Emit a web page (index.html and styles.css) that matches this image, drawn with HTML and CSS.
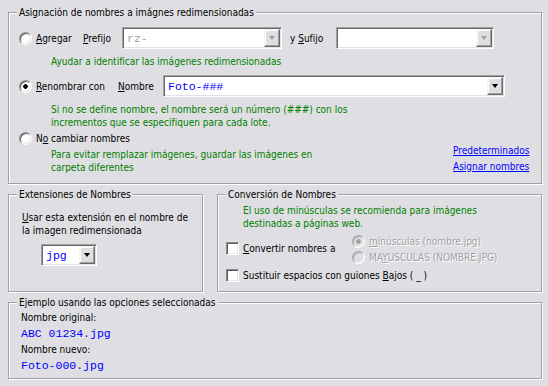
FILE: index.html
```html
<!DOCTYPE html>
<html lang="es">
<head>
  <meta charset="UTF-8">
  <title>Nombres de imágenes</title>
  <link rel="stylesheet" href="styles.css">
</head>
<body>
  <div class="dialog">
    <fieldset class="group naming">
      <legend>Asignación de nombres a imágnes redimensionadas</legend>

      <div class="row row-add">
        <label class="opt opt-add"><input type="radio" name="mode"><span><u>A</u>gregar</span></label>
        <span class="field-label w-prefix"><u>P</u>refijo</span>
        <div class="combo combo-prefix disabled"><span class="combo-text">rz-</span><span class="combo-btn"></span></div>
        <span class="field-label w-suffix">y <u>S</u>ufijo</span>
        <div class="combo combo-suffix disabled"><span class="combo-text"></span><span class="combo-btn"></span></div>
      </div>
      <p class="hint hint-add">Ayudar a identificar las imágenes redimensionadas</p>

      <div class="row row-rename">
        <label class="opt opt-rename"><input type="radio" name="mode" checked><span><u>R</u>enombrar con</span></label>
        <span class="field-label w-name"><u>N</u>ombre</span>
        <div class="combo combo-name"><span class="combo-text">Foto-###</span><span class="combo-btn"></span></div>
      </div>
      <p class="hint hint-rename">Si no se define nombre, el nombre será un número (###) con los<br>incrementos que se especifiquen para cada lote.</p>

      <div class="keep-area">
        <div class="keep-col">
          <label class="opt"><input type="radio" name="mode"><span>N<u>o</u> cambiar nombres</span></label>
          <p class="hint hint-keep">Para evitar remplazar imágenes, guardar las imágenes en<br>carpeta diferentes</p>
        </div>
        <div class="links">
          <a href="#">Predeterminados</a>
          <a href="#">Asignar nombres</a>
        </div>
      </div>
    </fieldset>

    <div class="lower">
      <fieldset class="group ext">
        <legend>Extensiones de Nombres</legend>
        <p class="ext-text"><u>U</u>sar esta extensión en el nombre de<br>la imagen redimensionada</p>
        <div class="combo combo-ext"><span class="combo-text">jpg</span><span class="combo-btn"></span></div>
      </fieldset>

      <fieldset class="group conv">
        <legend>Conversión de Nombres</legend>
        <p class="hint hint-conv">El uso de minúsculas se recomienda para imágenes<br>destinadas a páginas web.</p>
        <div class="conv-row">
          <label class="check check-convert"><input type="checkbox"><span><u>C</u>onvertir nombres a</span></label>
          <div class="case-options">
            <label class="opt off"><input type="radio" name="case" checked disabled><span><u>m</u>inúsculas (nombre.jpg)</span></label>
            <label class="opt off"><input type="radio" name="case" disabled><span>MA<u>Y</u>USCULAS (NOMBRE.JPG)</span></label>
          </div>
        </div>
        <label class="check check-spaces"><input type="checkbox"><span>Sustituir espacios con guiones <u>B</u>ajos ( _ )</span></label>
      </fieldset>
    </div>

    <fieldset class="group sample">
      <legend>Ejemplo usando las opciones seleccionadas</legend>
      <p class="sample-line">Nombre original:</p>
      <p class="sample-line mono">ABC 01234.jpg</p>
      <p class="sample-line">Nombre nuevo:</p>
      <p class="sample-line mono">Foto-000.jpg</p>
    </fieldset>
  </div>
</body>
</html>
```

FILE: styles.css
```css
body {
  margin: 0;
  background-color: #dfdfe3;
  font-family: "DejaVu Sans Condensed", "Liberation Sans", sans-serif;
  font-size: 10px;
  line-height: 13px;
  color: #000;
  white-space: nowrap;
}

p {
  margin: 0;
}

.dialog {
  width: 548px;
  height: 386px;
  box-sizing: border-box;
  padding: 6px 6px 0 8px;
}

/* etched group boxes */
.group {
  --pad: 0px;
  margin: 0;
  padding: 0 0 0 var(--pad);
  min-width: 0;
  border: 1px solid #a0a0a0;
  box-shadow: inset 1px 1px 0 #fff, 1px 1px 0 #fff;
}

.group legend {
  margin-left: calc(8px - var(--pad));
  padding: 0 2px;
  line-height: 13px;
  background-color: #dfdfe3;
}

.naming {
  --pad: 10px;
  padding-right: 8px;
  padding-bottom: 9px;
}

.row {
  display: flex;
  align-items: center;
  height: 22px;
}

.row-add {
  margin-top: 8px;
}

.row-rename {
  margin-top: 7px;
}

.opt {
  display: flex;
  align-items: center;
  gap: 4px;
  height: 13px;
}

.opt-add {
  width: 64px;
}

.opt-rename {
  width: 99px;
}

.field-label {
  flex: none;
}

.w-prefix {
  width: 39px;
}

.w-suffix {
  width: 46px;
  margin-left: 8px;
}

.w-name {
  width: 45px;
}

.hint {
  color: #008000;
}

.hint-add {
  margin: 6px 0 0 32px;
}

.hint-rename {
  margin: 6px 0 0 32px;
}

.keep-area {
  display: flex;
  justify-content: space-between;
  align-items: flex-end;
  margin-top: 3px;
}

.hint-keep {
  margin: 3px 0 0 32px;
}

.links {
  display: flex;
  flex-direction: column;
  width: 80px;
  line-height: 16px;
  margin-bottom: -1px;
}

.links a {
  color: #0000ff;
}

/* radio buttons and check boxes */
input[type="radio"],
input[type="checkbox"] {
  appearance: none;
  flex: none;
  width: 13px;
  height: 13px;
  margin: 0;
  box-sizing: border-box;
  background-color: #fff;
  border: 1px solid;
  border-color: #8c8c8c #fff #fff #8c8c8c;
}

input[type="radio"] {
  border-radius: 50%;
  box-shadow: inset 1px 1px 0 #5a5a5a, inset -1px -1px 0 #e6e6e6;
}

input[type="radio"]:checked {
  background-image: radial-gradient(circle, #000 0 2px, transparent 2.5px);
}

input[type="radio"]:disabled {
  background-color: #dfdfe3;
  box-shadow: inset 1px 1px 0 #b0b0b4, inset -1px -1px 0 #f0f0f0;
  border-color: #a8a8a8 #fff #fff #a8a8a8;
}

input[type="radio"]:disabled:checked {
  background-image: radial-gradient(circle, #a0a0a0 0 2px, transparent 2.5px);
}

input[type="checkbox"] {
  box-shadow: inset 1px 1px 0 #5a5a5a, inset -1px -1px 0 #e6e6e6;
}

.off {
  color: #a0a0a4;
  text-shadow: 1px 1px 0 #fff;
}

.check {
  display: flex;
  align-items: center;
  gap: 4px;
}

/* combo boxes */
.combo {
  flex: none;
  display: flex;
  align-items: center;
  justify-content: space-between;
  height: 22px;
  box-sizing: border-box;
  padding: 1px;
  background-color: #fff;
  border: 1px solid;
  border-color: #a0a0a0 #fff #fff #a0a0a0;
  box-shadow: inset 1px 1px 0 #696969, inset -1px -1px 0 #e3e3e3;
}

.combo-prefix {
  width: 160px;
}

.combo-suffix {
  width: 158px;
}

.combo-name {
  width: 342px;
}

.combo-text {
  padding-left: 3px;
  font-family: "Liberation Mono", "Courier New", monospace;
  font-size: 11.5px;
  color: #0000ff;
}

.disabled .combo-text {
  color: #a0a0a0;
}

.combo-btn {
  position: relative;
  flex: none;
  width: 16px;
  height: 18px;
  box-sizing: border-box;
  background-color: #dfdfe3;
  border: 1px solid;
  border-color: #f4f4f4 #696969 #696969 #f4f4f4;
  box-shadow: inset -1px -1px 0 #a0a0a0, inset 1px 1px 0 #fff;
}

.combo-btn::after {
  content: "";
  position: absolute;
  left: 4px;
  top: 6px;
  border-left: 3.5px solid transparent;
  border-right: 3.5px solid transparent;
  border-top: 4px solid #000;
}

.disabled .combo-btn::after {
  border-top-color: #a0a0a0;
}

/* lower row */
.lower {
  display: grid;
  grid-template-columns: 195px 1fr;
  gap: 14px;
  margin-top: 4px;
}

.ext {
  --pad: 13px;
  padding-right: 4px;
}

.ext-text {
  margin-top: 10px;
}

.combo-ext {
  width: 56px;
  margin: 7px 0 0 19px;
}

.conv {
  --pad: 8px;
  padding-right: 6px;
  padding-bottom: 9px;
}

.hint-conv {
  margin: 3px 0 0 17px;
}

.conv-row {
  display: flex;
  align-items: center;
  margin-top: 5px;
}

.check-convert {
  width: 126px;
  margin-bottom: 3px;
}

.case-options {
  display: flex;
  flex-direction: column;
  gap: 3px;
}

.check-spaces {
  margin-top: 5px;
}

/* example */
.sample {
  --pad: 12px;
  margin-top: 4px;
  padding-right: 8px;
  padding-bottom: 4px;
}

.sample-line {
  line-height: 16px;
}

.sample-line:first-of-type {
  margin-top: 1px;
}

.mono {
  font-family: "Liberation Mono", "Courier New", monospace;
  font-size: 11.5px;
  color: #0000ff;
}
```
